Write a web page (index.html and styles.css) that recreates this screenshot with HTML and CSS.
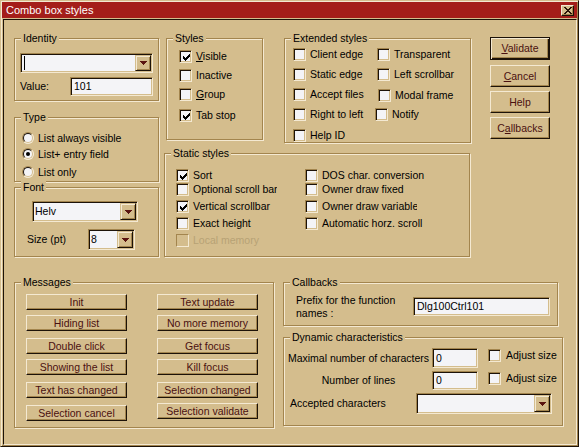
FILE: index.html
```html
<!DOCTYPE html>
<html>
<head>
<meta charset="utf-8">
<title>Combo box styles</title>
<link rel="stylesheet" href="styles.css">
</head>
<body>
<svg width="0" height="0" class="defs">
  <defs>
    <symbol id="chk" viewBox="0 0 7 7">
      <rect x="6" y="0" width="1" height="1"/>
      <rect x="5" y="1" width="2" height="1"/>
      <rect x="0" y="2" width="1" height="1"/><rect x="4" y="2" width="3" height="1"/>
      <rect x="0" y="3" width="2" height="1"/><rect x="3" y="3" width="3" height="1"/>
      <rect x="0" y="4" width="5" height="1"/>
      <rect x="1" y="5" width="3" height="1"/>
      <rect x="2" y="6" width="1" height="1"/>
    </symbol>
    <symbol id="tri" viewBox="0 0 7 4">
      <path d="M0 0h7v1h-1v1h-1v1h-1v1h-1v-1h-1v-1h-1v-1h-1z"/>
    </symbol>
  </defs>
</svg>
<div class="window">
  <div class="titlebar">
    <span class="title">Combo box styles</span>
    <span class="close">
      <svg width="8" height="7" viewBox="0 0 8 7" class="x">
        <path d="M0 0h2v1h1v1h2v-1h1v-1h2v1h-1v1h-1v1h-1v1h1v1h1v1h1v1h-2v-1h-1v-1h-2v1h-1v1h-2v-1h1v-1h1v-1h1v-1h-1v-1h-1v-1h-1z"/>
      </svg>
    </span>
  </div>
  <div class="client">
    <div class="top">
      <div class="col-a">
        <div class="group g-identity">
          <span class="legend">Identity</span>
          <div class="combo c-identity">
            <span class="field"><span class="caret"></span></span>
            <span class="drop"><svg class="tri"><use href="#tri"/></svg></span>
          </div>
          <div class="value-row">
            <span class="value-lbl">Value:</span>
            <span class="edit e-value">101</span>
          </div>
        </div>
        <div class="group g-type">
          <span class="legend">Type</span>
          <div class="radio-row"><span class="radio"></span><span>List always visible</span></div>
          <div class="radio-row"><span class="radio on"></span><span>List+ entry field</span></div>
          <div class="radio-row"><span class="radio"></span><span>List only</span></div>
        </div>
        <div class="group g-font">
          <span class="legend">Font</span>
          <div class="combo c-font">
            <span class="field">Helv</span>
            <span class="drop"><svg class="tri"><use href="#tri"/></svg></span>
          </div>
          <div class="size-row">
            <span class="size-lbl">Size (pt)</span>
            <div class="combo c-size">
              <span class="field">8</span>
              <span class="drop"><svg class="tri"><use href="#tri"/></svg></span>
            </div>
          </div>
        </div>
      </div>

      <div class="col-b">
        <div class="row-b">
          <div class="group g-styles">
            <span class="legend">Styles</span>
            <div class="styles-grid">
              <div class="check"><span class="cb"><svg class="mark"><use href="#chk"/></svg></span><span><u>V</u>isible</span></div>
              <div class="check"><span class="cb"></span><span>Inactive</span></div>
              <div class="check"><span class="cb"></span><span><u>G</u>roup</span></div>
              <div class="check"><span class="cb"><svg class="mark"><use href="#chk"/></svg></span><span>Tab stop</span></div>
            </div>
          </div>
          <div class="group g-ext">
            <span class="legend">Extended styles</span>
            <div class="ext-grid">
              <div class="check"><span class="cb"></span><span>Client edge</span></div>
              <div class="check"><span class="cb"></span><span>Transparent</span></div>
              <div class="check"><span class="cb"></span><span>Static edge</span></div>
              <div class="check"><span class="cb"></span><span>Left scrollbar</span></div>
              <div class="check"><span class="cb"></span><span>Accept files</span></div>
              <div class="check shift1"><span class="cb"></span><span>Modal frame</span></div>
              <div class="check"><span class="cb"></span><span>Right to left</span></div>
              <div class="check back2"><span class="cb"></span><span>Notify</span></div>
              <div class="check"><span class="cb"></span><span>Help ID</span></div>
            </div>
          </div>
        </div>
        <div class="group g-static">
          <span class="legend">Static styles</span>
          <div class="static-grid">
            <div class="check"><span class="cb"><svg class="mark"><use href="#chk"/></svg></span><span>Sort</span></div>
            <div class="check"><span class="cb"></span><span>DOS char. conversion</span></div>
            <div class="check clip1"><span class="cb"></span><span>Optional scroll bar</span></div>
            <div class="check"><span class="cb"></span><span>Owner draw fixed</span></div>
            <div class="check"><span class="cb"><svg class="mark"><use href="#chk"/></svg></span><span>Vertical scrollbar</span></div>
            <div class="check clip2"><span class="cb"></span><span>Owner draw variable</span></div>
            <div class="check"><span class="cb"></span><span>Exact height</span></div>
            <div class="check"><span class="cb"></span><span>Automatic horz. scroll</span></div>
            <div class="check disabled"><span class="cb"></span><span>Local memory</span></div>
          </div>
        </div>
      </div>

      <div class="col-c">
        <div class="btn default b-validate"><span><u>V</u>alidate</span></div>
        <div class="btn b-cancel"><span><u>C</u>ancel</span></div>
        <div class="btn b-help"><span>Help</span></div>
        <div class="btn b-callbacks"><span>C<u>a</u>llbacks</span></div>
      </div>
    </div>

    <div class="bottom">
      <div class="group g-msg">
        <span class="legend">Messages</span>
        <div class="msg-grid">
          <div class="btn mbtn">Init</div>
          <div class="btn mbtn">Text update</div>
          <div class="btn mbtn">Hiding list</div>
          <div class="btn mbtn">No more memory</div>
          <div class="btn mbtn">Double click</div>
          <div class="btn mbtn">Get focus</div>
          <div class="btn mbtn">Showing the list</div>
          <div class="btn mbtn">Kill focus</div>
          <div class="btn mbtn">Text has changed</div>
          <div class="btn mbtn">Selection changed</div>
          <div class="btn mbtn">Selection cancel</div>
          <div class="btn mbtn up2">Selection validate</div>
        </div>
      </div>
      <div class="col-r">
        <div class="group g-cb">
          <span class="legend">Callbacks</span>
          <div class="cb-row">
            <span class="prefix">Prefix for the function names :</span>
            <span class="edit e-prefix">Dlg100Ctrl101</span>
          </div>
        </div>
        <div class="group g-dyn">
          <span class="legend">Dynamic characteristics</span>
          <div class="dyn-row r1">
            <span class="dyn-lbl">Maximal number of characters</span>
            <span class="edit e-num">0</span>
            <div class="check adj"><span class="cb"></span><span>Adjust size</span></div>
          </div>
          <div class="dyn-row r2">
            <span class="dyn-lbl">Number of lines</span>
            <span class="edit e-num e-lines">0</span>
            <div class="check adj"><span class="cb"></span><span>Adjust size</span></div>
          </div>
          <div class="dyn-row r3">
            <span class="acc-lbl">Accepted characters</span>
            <div class="combo c-acc">
              <span class="field"></span>
              <span class="drop"><svg class="tri"><use href="#tri"/></svg></span>
            </div>
          </div>
        </div>
      </div>
    </div>
  </div>
</div>
</body>
</html>
```

FILE: styles.css
```css
:root {
  --face: #D4BD8D;
  --light: #F4E9D2;
  --shadow: #A3854E;
  --dark: #1C1208;
  --field: #F4F4F7;
  --btext: #4A1010;
  --title: #A41E1A;
  --disabled: #B7A275;
}

* { box-sizing: border-box; }

html, body {
  margin: 0;
  padding: 0;
  background: var(--face);
}

body {
  font-family: "Liberation Sans", Arial, sans-serif;
  font-size: 10.5px;
  line-height: 13px;
  color: #000;
}

.defs { position: absolute; width: 0; height: 0; }

u { text-decoration: underline; text-underline-offset: 1px; }

/* window frame */
.window {
  width: 579px;
  height: 447px;
  background: var(--face);
  border: 1px solid;
  border-color: var(--face) var(--dark) var(--dark) var(--face);
  padding: 1px;
  box-shadow: inset 1px 1px 0 var(--light), inset -1px -1px 0 var(--shadow);
  display: flex;
  flex-direction: column;
}

.titlebar {
  height: 16px;
  flex: none;
  background: var(--title);
  color: #fff;
  display: flex;
  align-items: center;
  justify-content: space-between;
  padding: 0 3px 0 4px;
}

.title { line-height: 16px; font-size: 11px; }

.close {
  width: 13px;
  height: 11px;
  background: var(--face);
  border: 1px solid;
  border-color: var(--light) var(--dark) var(--dark) var(--light);
  box-shadow: inset -1px -1px 0 var(--shadow);
  display: flex;
  align-items: center;
  justify-content: center;
}

.close .x { fill: #2A1408; display: block; }

.client {
  flex: 1;
  margin: 1px 0 0 1px;
  border: 1px solid;
  border-color: var(--dark) var(--light) var(--light) var(--dark);
}

/* group boxes */
.group {
  position: relative;
  border: 1px solid var(--shadow);
  box-shadow: inset 1px 1px 0 var(--light), 1px 1px 0 var(--light);
}

.legend {
  position: absolute;
  top: -7px;
  left: 6px;
  padding: 0 2px;
  background: var(--face);
  line-height: 13px;
  white-space: nowrap;
}

/* sunken fields */
.edit {
  border: 1px solid;
  border-color: var(--shadow) var(--light) var(--light) var(--shadow);
  box-shadow: inset 1px 1px 0 var(--dark), inset -1px -1px 0 var(--face);
  background: var(--field);
  padding: 0 3px;
  display: flex;
  align-items: center;
  white-space: nowrap;
}

.combo {
  display: flex;
  border: 1px solid;
  border-color: var(--shadow) var(--light) var(--light) var(--shadow);
  box-shadow: inset 1px 1px 0 var(--dark), inset -1px -1px 0 var(--face);
  background: var(--field);
  padding: 1px;
}

.combo .field {
  flex: 1;
  display: flex;
  align-items: center;
  padding-left: 1px;
}

.caret {
  width: 1px;
  height: 14px;
  background: #000;
  margin-left: 1px;
}

.drop {
  width: 16px;
  flex: none;
  background: var(--face);
  border: 1px solid;
  border-color: var(--face) var(--dark) var(--dark) var(--face);
  box-shadow: inset 1px 1px 0 var(--light), inset -1px -1px 0 var(--shadow);
  display: flex;
  align-items: center;
  justify-content: center;
}

.tri {
  width: 7px;
  height: 4px;
  fill: #5A1410;
  display: block;
}

/* buttons */
.btn {
  background: var(--face);
  color: var(--btext);
  border: 1px solid;
  border-color: var(--light) var(--dark) var(--dark) var(--light);
  box-shadow: inset -1px -1px 0 var(--shadow);
  display: flex;
  align-items: center;
  justify-content: center;
  white-space: nowrap;
}

.btn.default {
  border-color: var(--dark);
  box-shadow: inset 1px 1px 0 var(--light), inset -1px -1px 0 var(--dark), inset -2px -2px 0 var(--shadow);
}

/* checkboxes */
.check {
  display: flex;
  align-items: center;
  height: 13px;
  white-space: nowrap;
}

.cb {
  width: 13px;
  height: 13px;
  flex: none;
  border: 1px solid;
  border-color: var(--shadow) var(--light) var(--light) var(--shadow);
  box-shadow: inset 1px 1px 0 var(--dark), inset -1px -1px 0 var(--face);
  background: var(--field);
  margin-right: 4px;
  display: flex;
  align-items: center;
  justify-content: center;
}

.mark {
  width: 7px;
  height: 7px;
  fill: #000;
  display: block;
  margin: 1px 0 0 1px;
}

.check.disabled { color: var(--disabled); }
.check.disabled .cb {
  background: var(--face);
  box-shadow: none;
}

/* radios */
.radio {
  position: relative;
  width: 12px;
  height: 12px;
  flex: none;
  border-radius: 50%;
  border: 1px solid;
  border-color: var(--shadow) var(--light) var(--light) var(--shadow);
  background: var(--field);
  margin-right: 4px;
}

.radio::before {
  content: "";
  position: absolute;
  inset: 0;
  border-radius: 50%;
  border: 1px solid;
  border-color: var(--dark) var(--face) var(--face) var(--dark);
}

.radio.on::after {
  content: "";
  position: absolute;
  left: 3px;
  top: 3px;
  width: 4px;
  height: 4px;
  border-radius: 50%;
  background: #000;
}

/* ---------- top section ---------- */
.top {
  display: flex;
  align-items: flex-start;
  margin: 18px 0 0 10px;
}

.col-a {
  width: 145px;
  display: flex;
  flex-direction: column;
}

.g-identity {
  height: 63px;
  padding: 14px 0 0 5px;
}

.c-identity { width: 133px; height: 20px; }

.value-row {
  display: flex;
  align-items: center;
  margin-top: 4px;
}

.value-lbl { width: 50px; }

.e-value { width: 83px; height: 19px; }

.g-type {
  height: 65px;
  margin-top: 16px;
  padding: 12px 0 0 7px;
  display: grid;
  grid-template-rows: 16px 18px 16px;
  align-content: start;
}

.radio-row {
  display: flex;
  align-items: center;
  height: 16px;
  white-space: nowrap;
}

.g-font {
  height: 70px;
  margin-top: 5px;
  padding: 13px 0 0 12px;
}

.c-font { width: 106px; height: 21px; margin-left: 5px; }

.size-row {
  display: flex;
  align-items: center;
  margin-top: 7px;
}

.size-lbl { width: 61px; }

.c-size { width: 47px; height: 21px; }

.col-b {
  width: 307px;
  margin-left: 5px;
  display: flex;
  flex-direction: column;
}

.row-b {
  display: flex;
  align-items: flex-start;
}

.g-styles {
  width: 97px;
  height: 102px;
  margin-left: 2px;
  padding: 11px 0 0 12px;
}

.styles-grid {
  display: grid;
  grid-template-rows: 19px 19px 21px 13px;
  align-items: start;
}

.g-ext {
  width: 187px;
  height: 105px;
  margin-left: 21px;
  padding: 9px 0 0 8px;
}

.ext-grid {
  display: grid;
  grid-template-columns: 84px auto;
  grid-template-rows: 20px 20px 20px 21px 13px;
  align-items: start;
}

.shift1 { margin: 1px 0 0 1px; }
.back2 { margin-left: -2px; }

.g-static {
  width: 306px;
  height: 104px;
  margin-top: 10px;
  padding: 15px 0 0 11px;
}

.static-grid {
  display: grid;
  grid-template-columns: 102px auto;
  column-gap: 27px;
  grid-template-rows: 14px 17px 17px 17px 13px;
  align-items: start;
  justify-items: start;
}

.clip1 { width: 101px; overflow: hidden; }
.clip2 { width: 112px; overflow: hidden; }

.col-c {
  width: 60px;
  margin: -1px 0 0 19px;
  display: flex;
  flex-direction: column;
}

.b-validate { height: 23px; }
.b-cancel { height: 22px; margin-top: 5px; }
.b-help { height: 22px; margin-top: 4px; }
.b-callbacks { height: 22px; margin-top: 4px; }

/* ---------- bottom section ---------- */
.bottom {
  display: flex;
  align-items: flex-start;
  margin: 25px 0 0 10px;
}

.g-msg {
  width: 260px;
  height: 146px;
  padding: 11px 0 0 11px;
}

.msg-grid {
  display: grid;
  grid-template-columns: 101px 101px;
  column-gap: 30px;
  grid-template-rows: 21px 23px 21px 23px 23px 16px;
  align-items: start;
}

.mbtn { height: 16px; }
.up2 { margin-top: -2px; }

.col-r {
  margin-left: 9px;
  display: flex;
  flex-direction: column;
}

.g-cb {
  width: 275px;
  height: 44px;
  padding: 14px 0 0 12px;
}

.cb-row {
  display: flex;
  align-items: flex-start;
}

.prefix {
  width: 117px;
  margin-top: -3px;
  line-height: 13px;
}

.e-prefix { width: 137px; height: 19px; }

.g-dyn {
  width: 280px;
  height: 89px;
  margin-top: 11px;
  padding: 10px 0 0 1px;
}

.dyn-row {
  display: flex;
  align-items: flex-start;
}

.dyn-row.r2, .dyn-row.r3 { margin-top: 3px; }

.dyn-lbl {
  width: 147px;
  height: 20px;
  display: flex;
  align-items: center;
  justify-content: center;
  white-space: nowrap;
}

.r2 .dyn-lbl { height: 19px; }

.e-num { width: 46px; height: 20px; }
.e-lines { height: 19px; }

.adj {
  margin: 1px 0 0 10px;
}

.adj .cb { margin-right: 5px; }

.acc-lbl {
  width: 126px;
  height: 21px;
  margin-left: 5px;
  display: flex;
  align-items: center;
  white-space: nowrap;
}

.c-acc { width: 136px; height: 21px; }
```
